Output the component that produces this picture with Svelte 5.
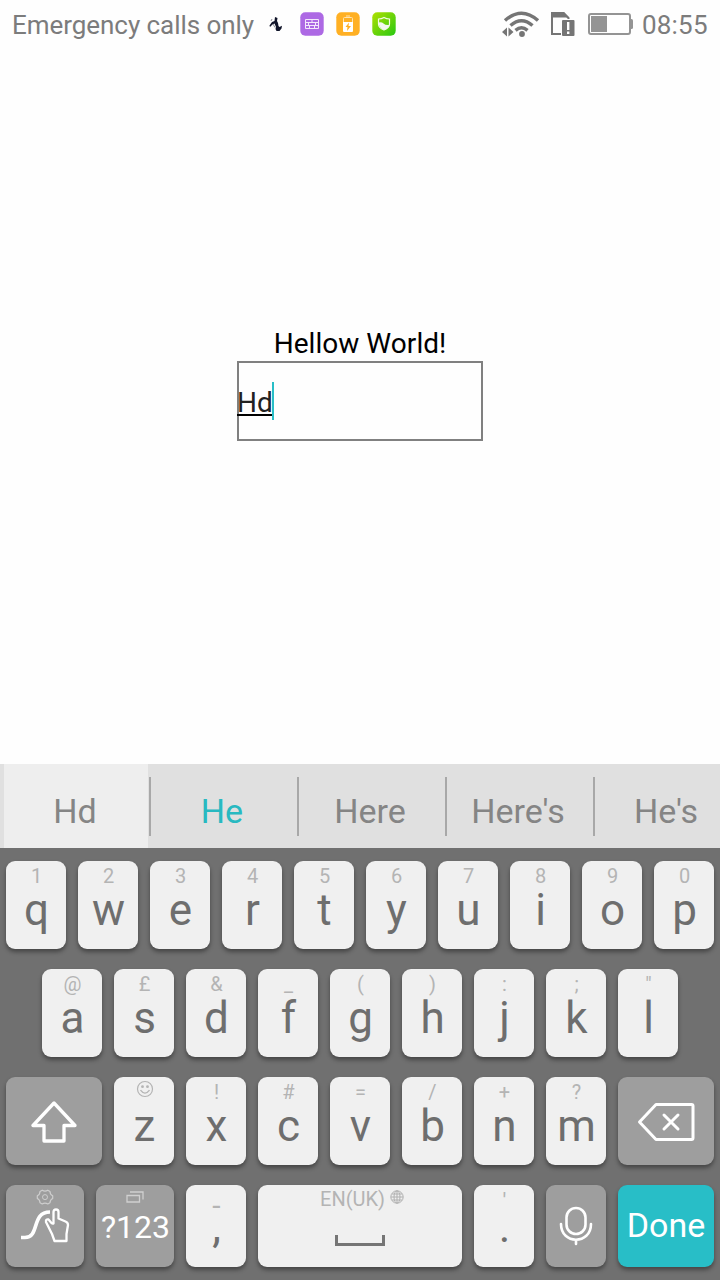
<script>
  const suggestions = ['Hd', 'He', 'Here', "Here's", "He's"];
  const pair = (letters, hints) => [...letters].map((c, i) => ({ c, h: hints[i] }));
  const row1 = pair('qwertyuiop', '1234567890');
  const row2 = pair('asdfghjkl', '@£&_():;"');
  const row3 = pair('zxcvbnm', ' !#=/+?');
</script>

<div class="screen">
  <header class="status">
    <span class="carrier">Emergency calls only</span>
    <svg class="app bird" width="24" height="24" viewBox="0 0 24 24">
      <path d="M11 5l2.500 1-.5 3 1 2 .5 3 1 1 2.500-1.200-.5 2.700-2 2.500h-3l-1-2 .5-2-1.500-3.500-2 1-2.500 2.500-.5-1.500 2.500-3.500 2.500-1z" fill="#11152a" />
      <path d="M8 7l-1 2M9 12l2 3.500" stroke="#8a8c96" stroke-width="1" />
    </svg>
    <svg class="app" width="24" height="24" viewBox="0 0 24 24">
      <rect x=".3" y=".3" width="23.4" height="23.4" rx="5" fill="#ad69e4" />
      <path d="M5.500 7.500h13v9h-13zM5 10.500h14M5 13.500h14M8.500 11v2M15.500 11v2M12 8v2.500M9.500 14v2M14.500 14v2" fill="none" stroke="#f3e8fb" stroke-width="1" />
    </svg>
    <svg class="app" width="24" height="24" viewBox="0 0 24 24">
      <rect x=".3" y=".3" width="23.4" height="23.4" rx="5" fill="#ffb024" />
      <path d="M7.500 10V6.500q0-1 1-1h7q1 0 1 1V10M10 4h4" fill="none" stroke="#ffe3b0" stroke-width="1" />
      <path d="M7 10h10v9q0 1-1 1H8q-1 0-1-1z" fill="#fff" />
      <path d="M13 10.500l-3.500 4.500h2l-.5 4 4-5h-2.500z" fill="#ffb024" />
    </svg>
    <svg class="app" width="24" height="24" viewBox="0 0 24 24">
      <defs><linearGradient id="lime" x1="0" y1="0" x2="1" y2="1"><stop offset="0" stop-color="#b0e000" /><stop offset="1" stop-color="#28c812" /></linearGradient></defs>
      <rect x=".3" y=".3" width="23.4" height="23.4" rx="5" fill="url(#lime)" />
      <path d="M6.500 7q3 0 5.500-1.500 2.500 1.500 5.500 1.500v5q0 4-5.500 6Q6.500 16 6.500 12z" fill="none" stroke="#f4fbe0" stroke-width="1.200" />
      <path d="M6.500 10.500q3-1 5 1t6 1.500q-1 3.500-5.500 5-5-2-5.500-7.500z" fill="#f2f7ee" />
    </svg>
    <span class="spacer"></span>
    <svg width="38" height="28" viewBox="0 0 38 28">
      <g fill="none" stroke="#757575" stroke-width="3.500">
        <path d="M3 10.500q16.500-14.500 33 0" /><path d="M8.500 15.500q11-9.500 22 0" /><path d="M13.500 20.300q6-5 12 0" />
      </g>
      <circle cx="20" cy="24" r="2.900" fill="#757575" />
      <path d="M0 22l5-4.500v9zM11.500 22l-5-4.500v9z" fill="#757575" />
    </svg>
    <svg class="sim" width="25" height="26" viewBox="0 0 25 26">
      <path d="M2 2h11.500l5 5v16H2z" fill="none" stroke="#757575" stroke-width="2" />
      <path d="M1 1h13l5 5.500H1z" fill="#757575" />
      <rect x="11" y="8" width="14" height="18" fill="#fefefe" />
      <rect x="12" y="9" width="12.500" height="16" rx="1" fill="#757575" />
      <path d="M18.200 11v8M18.200 20.500v2.500" stroke="#fff" stroke-width="2.400" />
    </svg>
    <svg class="battery" width="46" height="24" viewBox="0 0 46 24">
      <rect x="1" y="2" width="41" height="20" rx="2" fill="#fff" stroke="#949494" stroke-width="2" />
      <rect x="3" y="4" width="16" height="16" fill="#949494" />
      <path d="M43 7h.5q1.500 0 1.500 1.500v7q0 1.500-1.500 1.500h-.5z" fill="#949494" />
    </svg>
    <span class="time">08:55</span>
  </header>

  <main>
    <div class="title">Hellow World!</div>
    <div class="field"><span class="typed">Hd</span><i class="caret"></i></div>
  </main>

  <nav class="suggestions">
    {#each suggestions as s, i}
      <div class="suggestion" class:picked={i === 0} class:best={i === 1}>{s}</div>
    {/each}
  </nav>

  <section class="keyboard">
    <div class="row">
      {#each row1 as k}<div class="key"><small>{k.h}</small><b>{k.c}</b></div>{/each}
    </div>
    <div class="row">
      {#each row2 as k}<div class="key"><small>{k.h}</small><b>{k.c}</b></div>{/each}
    </div>
    <div class="row">
      <div class="key dark wide icon">
        <svg width="46" height="42" viewBox="0 0 46 42"><path d="M23 2L2 24.500h11V40h20V24.500h11z" fill="none" stroke="#fff" stroke-width="3.300" stroke-linejoin="round" /></svg>
      </div>
      {#each row3 as k, i}
        <div class="key">
          {#if i === 0}
            <small class="smile"><svg width="18" height="18" viewBox="0 0 18 18"><circle cx="9" cy="9" r="7.500" fill="none" stroke="#b4b4b4" stroke-width="1.200" /><circle cx="6.500" cy="6.700" r="1.400" fill="#b4b4b4" /><circle cx="11.500" cy="6.700" r="1.400" fill="#b4b4b4" /><path d="M4.500 10.200q4.500 6 9 0" fill="none" stroke="#b4b4b4" stroke-width="1.300" /></svg></small>
          {:else}<small>{k.h}</small>{/if}
          <b>{k.c}</b>
        </div>
      {/each}
      <div class="key dark wide icon">
        <svg width="58" height="40" viewBox="0 0 58 40"><path d="M2.500 20L19 2.500h35.500q1.500 0 1.500 1.500v32q0 1.500-1.500 1.500H19z M27 13l14 14M41 13L27 27" fill="none" stroke="#fff" stroke-width="3" stroke-linejoin="round" stroke-linecap="round" /></svg>
      </div>
    </div>
    <div class="row last">
      <div class="key dark mid">
        <svg class="gear" width="18" height="18" viewBox="0 0 18 18"><path d="M6.200 2.200Q9 4 11.800 2.200L14 3.500Q14 6.500 16.700 7.800V10.500Q14 11.800 14 14.700L11.800 16Q9 14.200 6.200 16L4 14.700Q4 11.800 1.300 10.500V7.800Q4 6.500 4 3.500Z" fill="none" stroke="#cecece" stroke-width="1.200" stroke-linejoin="round" /><circle cx="9" cy="9.100" r="2.500" fill="none" stroke="#cecece" /></svg>
        <svg class="swipe" width="50" height="38" viewBox="0 0 50 38"><path d="M1 30.500h4C20 30.500 11 5 30 5" fill="none" stroke="#fff" stroke-width="3.600" /><path d="M33.500 16.500V5q0-2.500 2.500-2.500T38.500 5v6.500l7 3q2.500 1 2.500 3.500l-1.500 9v7H34.500l-2.500-7-6-12q-.5-3 2.500-2.500l3 3.500q1 1 2 .5z" fill="#9e9e9e" stroke="#fff" stroke-width="2.300" stroke-linejoin="round" /></svg>
      </div>
      <div class="key dark mid">
        <svg class="windows" width="18" height="12" viewBox="0 0 18 12"><path d="M1 4.500h12.500v6.500H1zM4 1h13v7.500" fill="none" stroke="#d0d0d0" stroke-width="1.300" /></svg>
        <span class="sym">?123</span>
      </div>
      <div class="key"><small class="dash">-</small><b>,</b></div>
      <div class="key space">
        <small>EN(UK)<svg width="14" height="14" viewBox="0 0 14 14"><g fill="none" stroke="#b0b0b0"><circle cx="7" cy="7" r="6.200" /><ellipse cx="7" cy="7" rx="3" ry="6.200" /><path d="M7 1v12M1 7h12M2 4h10M2 10h10" /></g></svg></small>
        <i class="bar"></i>
      </div>
      <div class="key"><small class="tick">'</small><b>.</b></div>
      <div class="key dark icon mic">
        <svg width="34" height="40" viewBox="0 0 34 40"><g fill="none" stroke="#fff" stroke-width="2.600" stroke-linecap="round"><rect x="7.500" y="2" width="19" height="26" rx="9.500" /><path d="M2 18c0 21 30 21 30 0M17 34v4" /></g></svg>
      </div>
      <div class="key done wide"><span>Done</span></div>
    </div>
  </section>
</div>

<style>
  :global(body) { background: #fff; }
  .screen { width: 720px; height: 1280px; display: flex; flex-direction: column; font-family: Roboto, sans-serif; overflow: hidden; background: #fefefe; }
  .screen svg { display: block; flex: none; }
  .status { height: 48px; box-sizing: border-box; padding: 0 12px; display: flex; align-items: center; font-size: 26px; line-height: 50px; color: #7c7c7c; }
  .carrier { white-space: nowrap; width: 242px; padding-top: 2px; letter-spacing: -.05px; }
  .app { margin-right: 12px; }
  .bird { margin-left: 10px; }
  .spacer { flex: 1; }
  .sim { margin-left: 10px; }
  .battery { margin-left: 13px; }
  .time { margin-left: 8px; padding-top: 2px; width: 66px; white-space: nowrap; letter-spacing: .2px; }
  main { height: 716px; display: flex; flex-direction: column; align-items: center; padding-top: 279px; box-sizing: border-box; }
  .title { font-size: 28px; line-height: 34px; color: #000; letter-spacing: .05px; }
  .field { width: 246px; height: 80px; box-sizing: border-box; border: 2px solid #808080; display: flex; align-items: center; }
  .typed { margin: 0 0 4px -2px; width: 36px; height: 34px; box-sizing: border-box; border-bottom: 2px solid #000; font-size: 28px; line-height: 42px; color: #212121; }
  .caret { width: 2px; height: 38px; background: #28bec7; margin-left: -1px; }
  .suggestions { height: 84px; background: #e0e0e0; display: flex; padding-left: 4px; box-sizing: border-box; flex: none; }
  .suggestion { flex: 0 0 148px; box-sizing: border-box; position: relative; padding: 28px 8px 0 0; text-align: center; font-size: 34px; line-height: 38px; color: #858585; }
  .suggestion:not(.picked)::before { content: ''; position: absolute; left: -3px; top: 13px; width: 2px; height: 59px; background: #a8a8a8; }
  .picked { padding-right: 6px; background: linear-gradient(90deg, #eee 144px, transparent 144px); }
  .best { color: #28b9c1; }
  .keyboard { flex: 1; background: #707070; padding: 13px 6px 0; display: flex; flex-direction: column; gap: 20px; }
  .row { display: flex; justify-content: center; gap: 12px; height: 88px; }
  .last { height: 82px; }
  .key { width: 60px; box-sizing: border-box; border-radius: 9px; background: #f0f0f0; box-shadow: 0 3px 4px rgba(0,0,0,.38); display: flex; flex-direction: column; align-items: center; padding-top: 5px; color: #6e6e6e; }
  .key small { height: 20px; font-size: 20px; line-height: 20px; color: #b4b4b4; display: flex; justify-content: center; margin-left: 1px; }
  .key b { font-weight: 400; font-size: 44px; line-height: 44px; margin-top: 2px; margin-left: 1px; }
  .last .key b { margin-top: -5px; }
  .dark { background: #9e9e9e; color: #fff; }
  .wide { width: 96px; }
  .mid { width: 78px; }
  .icon { justify-content: center; padding-top: 2px; }
  .key .smile { margin-top: -2px; margin-bottom: 2px; }
  .gear { margin-top: -2px; }
  .swipe { margin-top: 1px; }
  .windows { margin-top: 1px; }
  .sym { font-size: 32px; line-height: 34px; margin-top: 7px; margin-left: 1px; }
  .key .dash { font-size: 30px; line-height: 31px; }
  .key .tick { font-size: 22px; line-height: 22px; }
  .space { width: 204px; }
  .key.space small { gap: 5px; margin-left: 4px; margin-top: -1px; margin-bottom: 1px; }
  .space small svg { margin-top: 1px; }
  .bar { width: 50px; height: 11px; box-sizing: border-box; border: solid #757575; border-width: 0 3px 3px; margin-top: 25px; }
  .mic { padding-top: 0; }
  .done { background: #28bec7; color: #fff; padding-top: 23px; font-size: 34px; line-height: 34px; }
</style>
